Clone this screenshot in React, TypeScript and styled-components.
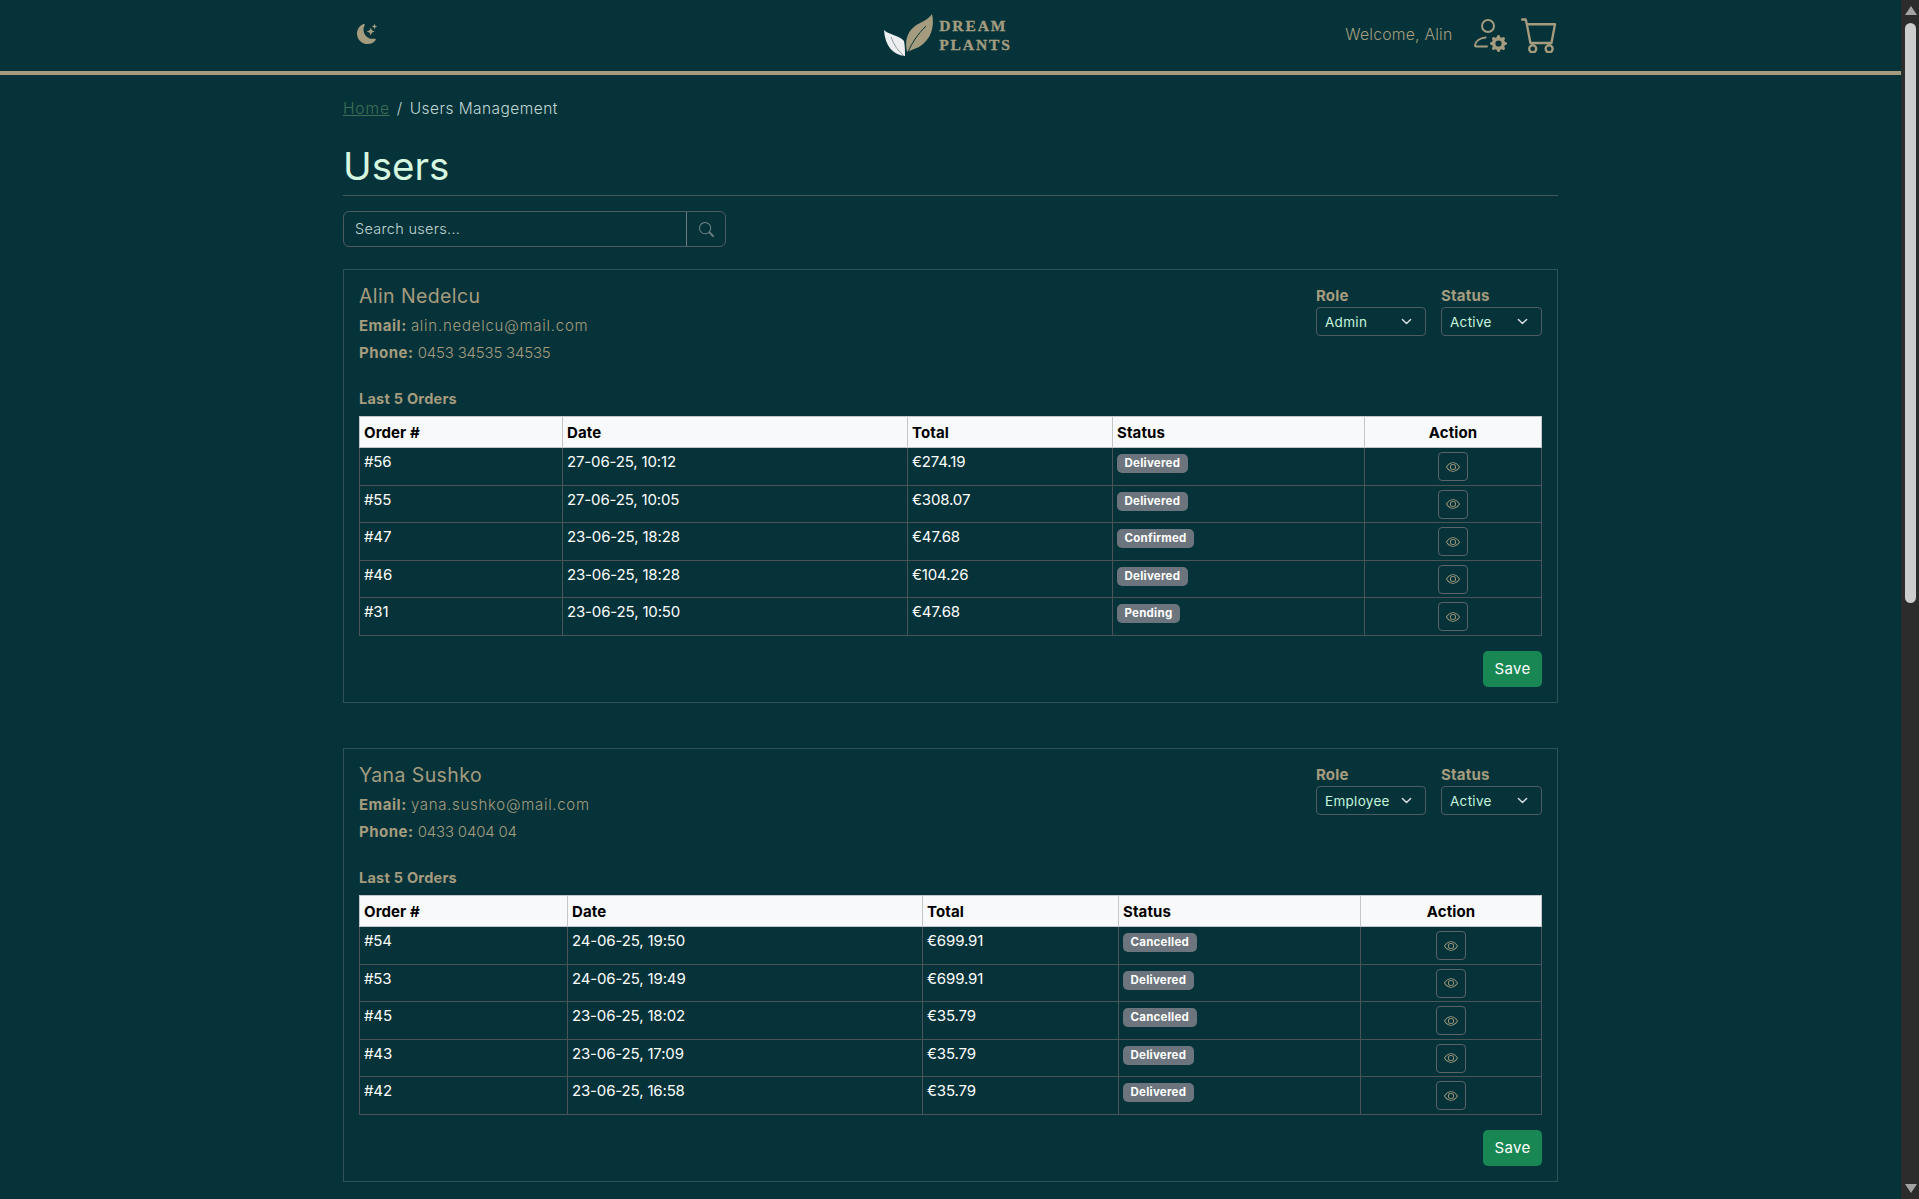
import styled, { createGlobalStyle } from "styled-components";
import { BsCart, BsEye, BsGearFill, BsMoonStarsFill, BsSearch } from "react-icons/bs";

const gold = "#a59c7f";
const bg = "#063339";

const chevron =
  "data:image/svg+xml,%3csvg xmlns='http://www.w3.org/2000/svg' viewBox='0 0 16 16'%3e%3cpath fill='none' stroke='%23dee2e6' stroke-linecap='round' stroke-linejoin='round' stroke-width='2' d='m2 5 6 6 6-6'/%3e%3c/svg%3e";

const GlobalStyle = createGlobalStyle`
  html, body {
    margin: 0;
    height: 100%;
    overflow: hidden;
    background: ${bg};
    font-family: Inter, "Liberation Sans", sans-serif;
  }
  * { box-sizing: border-box; }
`;

const Shell = styled.div`
  display: flex;
  height: 100vh;
  background: ${bg};
`;

const Page = styled.div`
  flex: 1;
  min-width: 0;
  overflow: hidden;
`;

const ScrollRail = styled.div`
  flex: 0 0 18px;
  display: flex;
  flex-direction: column;
  align-items: center;
  padding: 6px 0 6px 1px;
  background: #2c2c2c;
`;

const ArrowUp = styled.div`
  width: 0;
  height: 0;
  border-left: 6px solid transparent;
  border-right: 6px solid transparent;
  border-bottom: 9px solid #a3a3a3;
`;

const ArrowDown = styled(ArrowUp)`
  margin-top: auto;
  border-bottom: 0;
  border-top: 9px solid #a3a3a3;
`;

const ScrollThumb = styled.div`
  width: 11px;
  height: 580px;
  margin-top: 8px;
  border-radius: 6px;
  background: #cdcdcd;
`;

const Header = styled.header`
  height: 75px;
  border-bottom: 4px solid ${gold};
`;

const Container = styled.div`
  width: 1215px;
  margin: 0 auto;
`;

const HeaderRow = styled(Container)`
  height: 71px;
  display: grid;
  grid-template-columns: 1fr auto 1fr;
  align-items: center;
`;

const MoonButton = styled.div`
  display: flex;
  padding-left: 14px;
  padding-bottom: 3px;
  color: ${gold};
  font-size: 20px;
`;

const Logo = styled.div`
  display: flex;
  align-items: center;
  gap: 2px;
  margin-top: -1px;
  margin-right: 5px;
`;

const LogoText = styled.div`
  font-family: "Liberation Serif", serif;
  font-weight: 700;
  font-size: 15.5px;
  line-height: 19px;
  letter-spacing: 1.9px;
  color: ${gold};
  -webkit-text-stroke: 0.35px ${gold};
`;

const UserArea = styled.div`
  display: flex;
  justify-content: flex-end;
  align-items: center;
  color: ${gold};
`;

const Welcome = styled.span`
  padding-bottom: 2px;
  font-size: 15.8px;
  font-weight: 300;
  letter-spacing: 0.2px;
  margin-right: 20px;
`;

const UserIcon = styled.svg`
  width: 35px;
  height: 35px;
  margin-right: 13px;
`;

const CartIcon = styled(BsCart)`
  font-size: 37.5px;
  margin-right: 0;
  margin-top: -2px;
`;

const Breadcrumb = styled.nav`
  display: flex;
  align-items: center;
  height: 24px;
  margin-top: 21px;
  font-size: 15.5px;
  font-weight: 300;
  letter-spacing: 0.45px;
  color: #c1d6d4;
`;

const HomeLink = styled.a`
  color: #3f6f55;
  text-decoration: underline;
  letter-spacing: 0.9px;
`;

const Slash = styled.span`
  margin: 0 7px;
`;

const Title = styled.h1`
  margin: 21px 0 0;
  height: 55px;
  font-size: 38.5px;
  line-height: 50px;
  font-weight: 400;
  color: #d6f8e0;
  border-bottom: 1px solid #46585d;
`;

const SearchBox = styled.div`
  display: flex;
  width: 383px;
  height: 36px;
  margin-top: 15px;
  border: 1px solid #4f5b62;
  border-radius: 6px;
`;

const SearchInput = styled.input`
  flex: 1;
  min-width: 0;
  padding: 0 11px 2px;
  background: transparent;
  border: 0;
  outline: 0;
  font: 300 14.5px Inter, sans-serif;
  letter-spacing: 0.3px;
  color: #c1d6d4;

  &::placeholder { color: #c1d6d4; opacity: 1; }
`;

const SearchButton = styled.div`
  width: 39px;
  display: flex;
  align-items: center;
  justify-content: center;
  border-left: 1px solid #6c7a80;
  color: #6f8284;
  font-size: 15px;
`;

const Card = styled.section`
  height: 433.5px;
  margin-top: 22px;
  padding: 14px 15px 15px;
  border: 1px solid #2e5257;

  & + & { margin-top: 45.5px; }
`;

const CardTop = styled.div`
  display: flex;
  justify-content: space-between;
  height: 106px;
`;

const UserName = styled.h2`
  margin: 0;
  font-size: 19.5px;
  line-height: 24px;
  font-weight: 400;
  letter-spacing: 0.4px;
  color: ${gold};
`;

const InfoLine = styled.p`
  margin: 6px 0 0;
  height: 21px;
  font-size: 15px;
  line-height: 21px;
  font-weight: 300;
  color: ${gold};

  &:first-of-type { margin-top: 7px; }
  & strong { font-weight: 700; letter-spacing: 0.5px; }
`;

const InfoValue = styled.span<{ $spacing: number }>`
  letter-spacing: ${(p) => p.$spacing}px;
`;

const Selects = styled.div`
  display: flex;
  gap: 15px;
  padding-top: 1px;
`;

const Field = styled.label`
  display: block;
  color: ${gold};
  font-size: 15px;
  line-height: 22px;
  font-weight: 700;
  letter-spacing: 0.2px;
`;

const Select = styled.select<{ $w: number }>`
  display: block;
  width: ${(p) => p.$w}px;
  height: 29px;
  padding: 0 8px;
  appearance: none;
  background: transparent url("${chevron}") no-repeat right 13px center / 11px 11px;
  border: 1px solid #4f5b62;
  border-radius: 4px;
  font: 400 13.5px Inter, sans-serif;
  letter-spacing: 0.3px;
  color: #c6f5de;
`;

const OrdersTitle = styled.h3`
  margin: 0 0 9px;
  font-size: 14.5px;
  line-height: 17px;
  font-weight: 700;
  letter-spacing: 0.25px;
  color: ${gold};
`;

const Table = styled.table`
  width: 1182px;
  table-layout: fixed;
  border-collapse: collapse;
  font-size: 15px;
`;

const Th = styled.th<{ $center?: boolean }>`
  height: 31px;
  padding: 0 4px;
  background: #f8f9fa;
  border: 1px solid #c4c7ca;
  color: #000;
  font-weight: 700;
  letter-spacing: 0.1px;
  text-align: ${(p) => (p.$center ? "center" : "left")};
`;

const Td = styled.td<{ $center?: boolean }>`
  height: 37.6px;
  padding: 4px 4px 2px;
  vertical-align: top;
  border: 1px solid #4b5459;
  color: #fff;
  line-height: 20px;
  font-weight: 400;
  letter-spacing: -0.15px;
  text-align: ${(p) => (p.$center ? "center" : "left")};
`;

const Badge = styled.span`
  display: inline-block;
  margin-top: 2px;
  padding: 0 7.5px;
  height: 19px;
  line-height: 18px;
  border-radius: 5px;
  background: #6c757d;
  color: #fff;
  font-size: 11.5px;
  font-weight: 700;
  letter-spacing: 0.25px;
`;

const ViewButton = styled.button`
  display: inline-flex;
  align-items: center;
  justify-content: center;
  width: 30px;
  height: 29px;
  padding: 0;
  background: transparent;
  border: 1px solid #596369;
  border-radius: 4px;
  color: ${gold};
  font-size: 14px;
`;

const CardFooter = styled.div`
  display: flex;
  justify-content: flex-end;
  margin-top: 15px;
`;

const SaveButton = styled.button`
  width: 59px;
  height: 36px;
  padding: 0;
  border: 0;
  border-radius: 5px;
  background: #198754;
  color: #fff;
  font: 400 15px Inter, sans-serif;
  letter-spacing: 0.3px;
`;

const LogoMark = () => (
  <svg width="53" height="44" viewBox="0 0 53 44" aria-hidden="true">
    <path d="M48 1C51 13 47 27 35 34 31 36 27 37 23 39 21 29 22 20 31 13 37 9 44 7 48 1Z" fill={gold} />
    <path d="M24 39C28 30 33 22 42 13" fill="none" stroke={bg} strokeWidth="1" />
    <path d="M0 17C5 22 15 22 20 28 21 33 21 38 21 43 9 42 1 33 0 17Z" fill="#eceef0" />
    <path d="M7 24C10 32 14 38 20 43" fill="none" stroke="#8d9a9c" strokeWidth="1" />
  </svg>
);

const UserGear = () => (
  <UserIcon viewBox="0 0 35 35" aria-hidden="true">
    <circle cx="15" cy="8" r="6" fill="none" stroke="currentColor" strokeWidth="2" />
    <path
      d="M12.5 19.5C7 20 2.5 23 2 27.5Q2 28.5 3 28.5H14"
      fill="none"
      stroke="currentColor"
      strokeWidth="2"
      strokeLinecap="round"
    />
    <BsGearFill x="17" y="17" size="17" />
  </UserIcon>
);

type Order = { id: number; date: string; total: string; status: string };

type User = {
  name: string;
  email: string;
  phone: string;
  role: string;
  emailSpacing: number;
  phoneSpacing: number;
  cols: number[];
  orders: Order[];
};

const users: User[] = [
  {
    name: "Alin Nedelcu",
    email: "alin.nedelcu@mail.com",
    phone: "0453 34535 34535",
    role: "Admin",
    emailSpacing: 0.75,
    phoneSpacing: -0.2,
    cols: [203, 345, 205, 252, 177],
    orders: [
      { id: 56, date: "27-06-25, 10:12", total: "€274.19", status: "Delivered" },
      { id: 55, date: "27-06-25, 10:05", total: "€308.07", status: "Delivered" },
      { id: 47, date: "23-06-25, 18:28", total: "€47.68", status: "Confirmed" },
      { id: 46, date: "23-06-25, 18:28", total: "€104.26", status: "Delivered" },
      { id: 31, date: "23-06-25, 10:50", total: "€47.68", status: "Pending" },
    ],
  },
  {
    name: "Yana Sushko",
    email: "yana.sushko@mail.com",
    phone: "0433 0404 04",
    role: "Employee",
    emailSpacing: 0.7,
    phoneSpacing: -0.2,
    cols: [208, 355, 196, 242, 181],
    orders: [
      { id: 54, date: "24-06-25, 19:50", total: "€699.91", status: "Cancelled" },
      { id: 53, date: "24-06-25, 19:49", total: "€699.91", status: "Delivered" },
      { id: 45, date: "23-06-25, 18:02", total: "€35.79", status: "Cancelled" },
      { id: 43, date: "23-06-25, 17:09", total: "€35.79", status: "Delivered" },
      { id: 42, date: "23-06-25, 16:58", total: "€35.79", status: "Delivered" },
    ],
  },
];

function UserCard({ user }: { user: User }) {
  return (
    <Card>
      <CardTop>
        <div>
          <UserName>{user.name}</UserName>
          <InfoLine>
            <strong>Email:</strong> <InfoValue $spacing={user.emailSpacing}>{user.email}</InfoValue>
          </InfoLine>
          <InfoLine>
            <strong>Phone:</strong> <InfoValue $spacing={user.phoneSpacing}>{user.phone}</InfoValue>
          </InfoLine>
        </div>
        <Selects>
          <Field>
            Role
            <Select $w={110} defaultValue={user.role}>
              <option>Admin</option>
              <option>Employee</option>
            </Select>
          </Field>
          <Field>
            Status
            <Select $w={101} defaultValue="Active">
              <option>Active</option>
              <option>Inactive</option>
            </Select>
          </Field>
        </Selects>
      </CardTop>
      <OrdersTitle>Last 5 Orders</OrdersTitle>
      <Table>
        <colgroup>
          {user.cols.map((w, i) => (
            <col key={i} width={w} />
          ))}
        </colgroup>
        <thead>
          <tr>
            <Th>Order #</Th>
            <Th>Date</Th>
            <Th>Total</Th>
            <Th>Status</Th>
            <Th $center>Action</Th>
          </tr>
        </thead>
        <tbody>
          {user.orders.map((order) => (
            <tr key={order.id}>
              <Td>#{order.id}</Td>
              <Td>{order.date}</Td>
              <Td>{order.total}</Td>
              <Td>
                <Badge>{order.status}</Badge>
              </Td>
              <Td $center>
                <ViewButton>
                  <BsEye />
                </ViewButton>
              </Td>
            </tr>
          ))}
        </tbody>
      </Table>
      <CardFooter>
        <SaveButton>Save</SaveButton>
      </CardFooter>
    </Card>
  );
}

export default function App() {
  return (
    <Shell>
      <GlobalStyle />
      <Page>
        <Header>
          <HeaderRow>
            <MoonButton>
              <BsMoonStarsFill />
            </MoonButton>
            <Logo>
              <LogoMark />
              <LogoText>
                DREAM
                <br />
                PLANTS
              </LogoText>
            </Logo>
            <UserArea>
              <Welcome>Welcome, Alin</Welcome>
              <UserGear />
              <CartIcon />
            </UserArea>
          </HeaderRow>
        </Header>
        <Container>
          <Breadcrumb>
            <HomeLink>Home</HomeLink>
            <Slash>/</Slash>
            Users Management
          </Breadcrumb>
          <Title>Users</Title>
          <SearchBox>
            <SearchInput placeholder="Search users..." />
            <SearchButton>
              <BsSearch />
            </SearchButton>
          </SearchBox>
          {users.map((user) => (
            <UserCard key={user.name} user={user} />
          ))}
        </Container>
      </Page>
      <ScrollRail>
        <ArrowUp />
        <ScrollThumb />
        <ArrowDown />
      </ScrollRail>
    </Shell>
  );
}
